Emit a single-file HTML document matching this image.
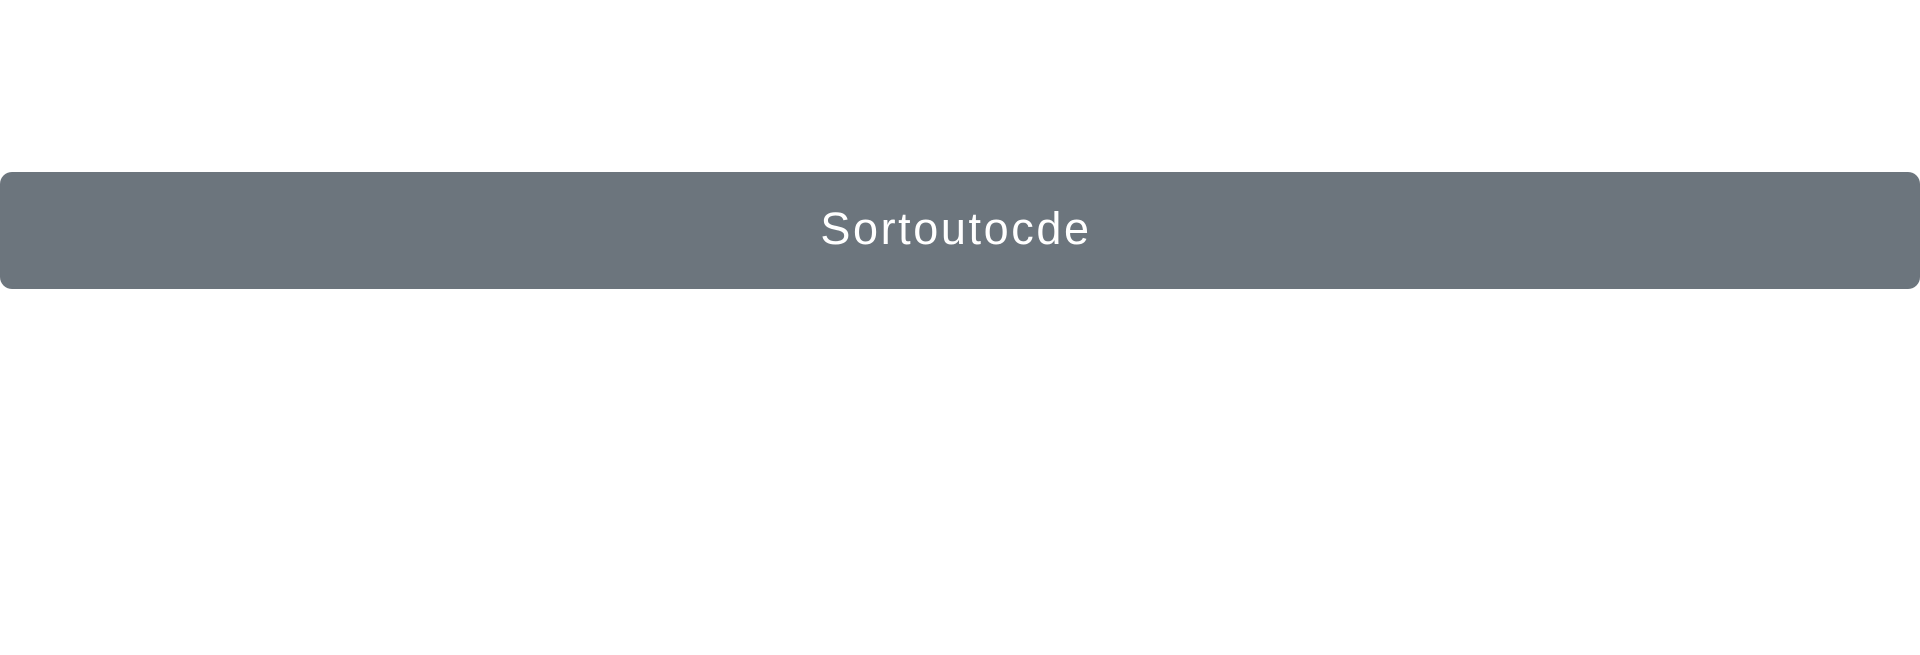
<!DOCTYPE html>
<html><head><style>
html,body{margin:0;padding:0;width:1920px;height:655px;background:#fff;overflow:hidden}
.bar{position:absolute;left:0;top:172px;width:1920px;height:117px;background:#6c757d;border-radius:12px;display:flex;align-items:center;justify-content:center}
.t{font-family:"Liberation Sans",sans-serif;font-size:45px;color:#fff;letter-spacing:2.6px;margin-top:-4px;margin-left:-8px}
</style></head><body>
<div class="bar"><span class="t">Sortoutocde</span></div>
</body></html>
